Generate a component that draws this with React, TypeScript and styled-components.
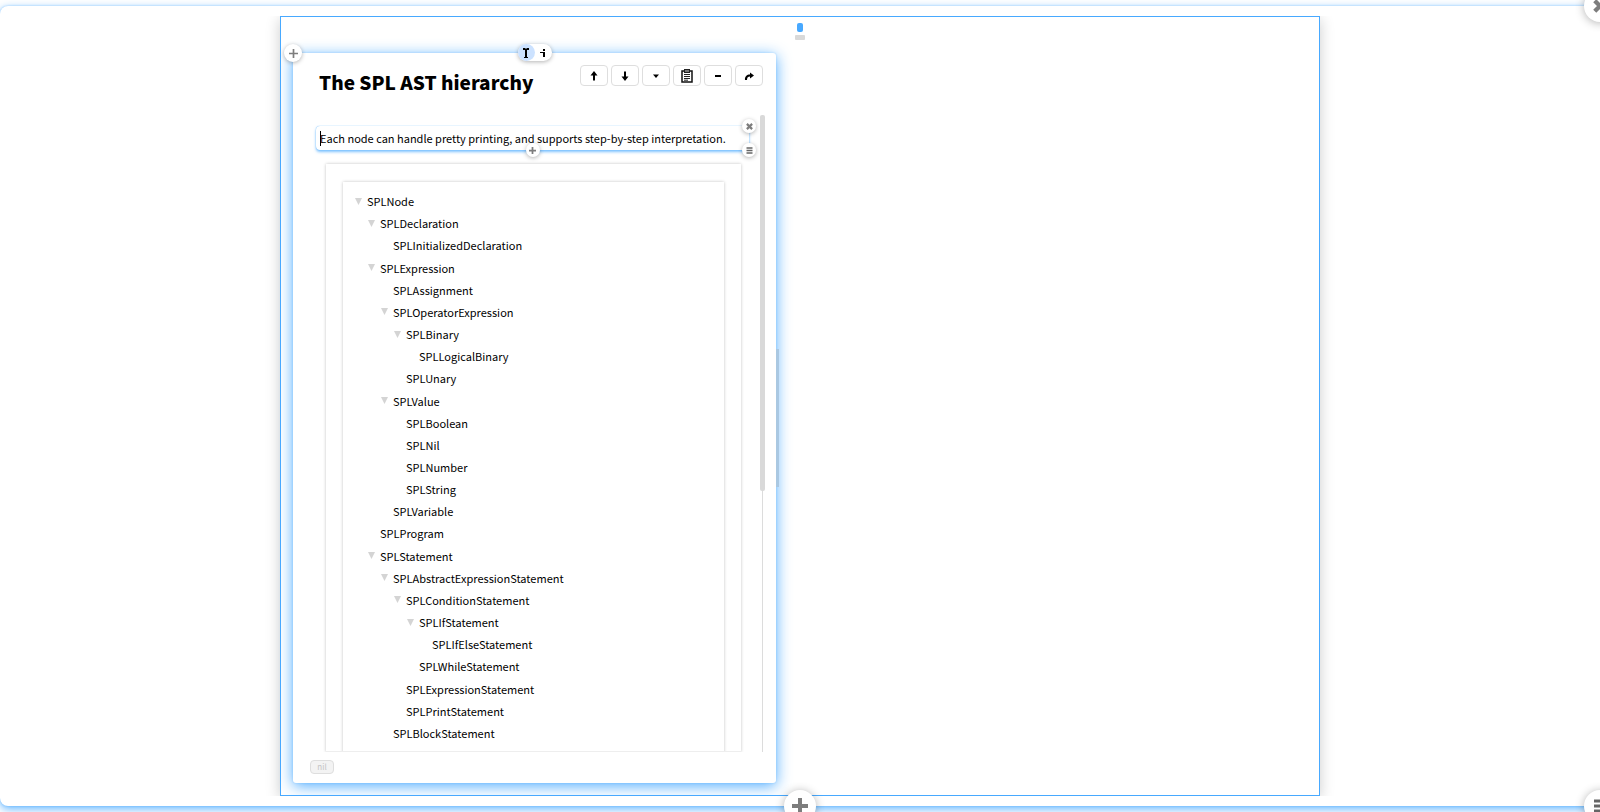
import React from "react";
import styled, { createGlobalStyle } from "styled-components";

const GlobalStyle = createGlobalStyle`
  * { box-sizing: border-box; }
  body {
    margin: 0;
    background: #fff;
    color: #000;
    font-family: "Noto Sans CJK SC", "Noto Sans", sans-serif;
    font-size: 11px;
    overflow: hidden;
  }
  button, input { font: inherit; color: inherit; padding: 0; }
`;

const blue = "#48a9ff";

const Page = styled.main`
  height: 100vh;
  padding: 6px 0;
  overflow: hidden;
`;

const Space = styled.section`
  position: relative;
  display: flex;
  justify-content: center;
  height: 100%;
  padding: 10px 0;
  border-radius: 8px;
  background: #fff;
  box-shadow: 0 0 2px rgba(72, 169, 255, 0.5), 0 3px 10px rgba(72, 169, 255, 0.85);
`;

const Clip = styled.div`
  display: flex;
  justify-content: center;
  width: 100%;
  overflow: hidden;
`;

const Pane = styled.div`
  position: relative;
  display: flex;
  width: 65%;
  padding: 36px 12px 12px;
  border: 1px solid ${blue};
  background: #fff;
  box-shadow: 0 3px 14px rgba(0, 0, 0, 0.2);
`;

const PaneMarker = styled.div`
  position: absolute;
  top: 6px;
  left: 0;
  right: 0;
  display: flex;
  flex-direction: column;
  align-items: center;
  gap: 3px;
`;

const Drop = styled.span`
  width: 6px;
  height: 9px;
  border-radius: 2px;
  background: ${blue};
`;

const Pill = styled.span`
  width: 10px;
  height: 5px;
  border-radius: 1px;
  background: #d9d9d9;
`;

const Card = styled.article`
  position: relative;
  display: flex;
  flex-direction: column;
  width: 483px;
  padding: 12px 11px 9px 17px;
  border-radius: 3px;
  background: #fff;
  box-shadow: 0 0 2px rgba(72, 169, 255, 0.4), 0 3px 15px rgba(72, 169, 255, 0.95);
`;

const Resizer = styled.span`
  position: absolute;
  top: 296px;
  left: 100%;
  width: 3px;
  height: 138px;
  background: #aac8e2;
`;

const Header = styled.header`
  display: flex;
  justify-content: space-between;
  align-items: flex-start;
  height: 50px;
  padding: 0 2px 0 9px;
`;

const Title = styled.h1`
  margin: 0;
  font-size: 19px;
  line-height: 34px;
  font-weight: 900;
  white-space: nowrap;
`;

const Toolbar = styled.div`
  display: flex;
  gap: 3px;
`;

const ToolButton = styled.button`
  display: flex;
  align-items: center;
  justify-content: center;
  width: 28px;
  height: 21px;
  border: 1px solid #dedede;
  border-radius: 4px;
  background: #fff;
`;

const Scroller = styled.div`
  display: flex;
  flex: 1;
  min-height: 0;
`;

const Content = styled.div`
  display: flex;
  flex: 1;
  flex-direction: column;
  gap: 14px;
  min-width: 0;
  padding: 11px 11px 0 6px;
  overflow: hidden;
`;

const Track = styled.div`
  display: flex;
  justify-content: center;
  width: 5px;
  background: linear-gradient(#dcdcdc, #dcdcdc) 2px 0 / 1px 100% no-repeat;
`;

const Thumb = styled.span`
  width: 5px;
  height: 59%;
  border-radius: 2px;
  background: #d9d9d9;
`;

const TextBlock = styled.div`
  position: relative;
  display: flex;
  align-items: center;
  height: 24px;
  padding: 0 4px;
  border-radius: 4px;
  background: #fff;
  box-shadow: 0 0 1px ${blue}, 0 2px 3px rgba(72, 169, 255, 0.7);
`;

const TextInput = styled.input`
  width: 100%;
  border: 0;
  outline: 0;
  background: none;
`;

const Caret = styled.span`
  position: absolute;
  top: 5px;
  left: 4px;
  width: 1px;
  height: 15px;
  background: #000;
`;

const OuterFrame = styled.div`
  display: flex;
  flex: 1;
  min-height: 0;
  margin: 0 8px 0 10px;
  padding: 18px 17px 0;
  border-bottom: 1px solid #eee;
  overflow: hidden;
  box-shadow: 0 0 3px rgba(0, 0, 0, 0.24);
`;

const InnerFrame = styled.div`
  flex: 1;
  min-height: 600px;
  padding: 8px 10px;
  box-shadow: 0 0 3px rgba(0, 0, 0, 0.24);
`;

const Tree = styled.ul`
  display: grid;
  grid-auto-rows: 1fr;
  height: 554px;
  margin: 0;
  padding: 0;
  list-style: none;
`;

const TreeRow = styled.li<{ $level: number }>`
  display: flex;
  align-items: center;
  padding-left: ${(p) => p.$level * 13}px;
  line-height: 20px;
`;

const Toggle = styled.span`
  display: flex;
  width: 14px;
`;

const ToggleButton = styled.button`
  display: flex;
  border: 0;
  padding: 0 2px;
  background: none;
`;

const Footer = styled.footer`
  display: flex;
  padding-top: 8px;
`;

const Chip = styled.button`
  width: 24px;
  height: 14px;
  border: 1px solid #dedede;
  border-radius: 4px;
  background: #f3f3f3;
  color: #c4c4c4;
  font-size: 8px;
  line-height: 10px;
`;

const Handle = styled.button<{ $size: number; $x: string; $y: string }>`
  position: absolute;
  left: ${(p) => p.$x};
  top: ${(p) => p.$y};
  display: flex;
  align-items: center;
  justify-content: center;
  width: ${(p) => p.$size}px;
  height: ${(p) => p.$size}px;
  margin: ${(p) => -p.$size / 2}px;
  border: 0;
  border-radius: 50%;
  background: #fff;
  box-shadow: 0 1px ${(p) => (p.$size > 20 ? 10 : 4)}px rgba(0, 0, 0, 0.3);
`;

const Tabs = styled.div`
  position: absolute;
  top: -9px;
  left: 0;
  right: 0;
  display: flex;
  justify-content: center;
`;

const TabGroup = styled.div`
  display: flex;
  border-radius: 9px;
  background: #fff;
  box-shadow: 0 1px 4px rgba(0, 0, 0, 0.3);
`;

const Tab = styled.button<{ $active?: boolean }>`
  display: flex;
  align-items: center;
  justify-content: center;
  width: 17px;
  height: 17px;
  border: 0;
  border-radius: 50%;
  background: ${(p) => (p.$active ? "#cce2ff" : "transparent")};
`;

const Plus = ({ size, weight }: { size: number; weight: number }) => (
  <svg width={size} height={size} viewBox="0 0 16 16">
    <path d="M8 0V16M0 8H16" stroke="#7d7d7d" strokeWidth={weight} />
  </svg>
);
const Cross = ({ size }: { size: number }) => (
  <svg width={size} height={size} viewBox="0 0 16 16">
    <path d="M2 2L14 14M14 2L2 14" stroke="#7d7d7d" strokeWidth="5" />
  </svg>
);
const Bars = ({ size }: { size: number }) => (
  <svg width={size} height={size} viewBox="0 0 14 14">
    <path d="M1 2H13M1 7H13M1 12H13" stroke="#666" strokeWidth="3" />
  </svg>
);

const icons: { label: string; icon: React.ReactNode }[] = [
  { label: "Move up", icon: <path d="M5 10.500V5.500H2.500L6 1L9.500 5.500H7V10.500Z" /> },
  { label: "Move down", icon: <path d="M5 1.500V6.500H2.500L6 11L9.500 6.500H7V1.500Z" /> },
  { label: "Menu", icon: <path d="M3 4.500H9L6 8Z" /> },
  { label: "Copy", icon: null },
  { label: "Remove", icon: <path d="M3 5H9V7H3Z" /> },
  { label: "Share", icon: <path d="M2 10C1.500 6.500 4 4.500 7 4.500V2.500L11 5.500L7 8.500V6.500C5 6.500 4 7.500 4 10Z" /> },
];

const Clipboard = () => (
  <svg width="12" height="14" viewBox="0 0 12 14">
    <rect x="1" y="2" width="10" height="11" fill="#fff" stroke="#111" strokeWidth="1.500" />
    <rect x="3.500" y="0.500" width="5" height="3" fill="#777" stroke="#222" />
    <path d="M3 5.500H9M3 7.500H9M3 9.500H9M3 11.200H7" stroke="#222" strokeWidth="1" />
  </svg>
);

const nodes: [string, number, boolean][] = [
  ["SPLNode", 0, true],
  ["SPLDeclaration", 1, true],
  ["SPLInitializedDeclaration", 2, false],
  ["SPLExpression", 1, true],
  ["SPLAssignment", 2, false],
  ["SPLOperatorExpression", 2, true],
  ["SPLBinary", 3, true],
  ["SPLLogicalBinary", 4, false],
  ["SPLUnary", 3, false],
  ["SPLValue", 2, true],
  ["SPLBoolean", 3, false],
  ["SPLNil", 3, false],
  ["SPLNumber", 3, false],
  ["SPLString", 3, false],
  ["SPLVariable", 2, false],
  ["SPLProgram", 1, false],
  ["SPLStatement", 1, true],
  ["SPLAbstractExpressionStatement", 2, true],
  ["SPLConditionStatement", 3, true],
  ["SPLIfStatement", 4, true],
  ["SPLIfElseStatement", 5, false],
  ["SPLWhileStatement", 4, false],
  ["SPLExpressionStatement", 3, false],
  ["SPLPrintStatement", 3, false],
  ["SPLBlockStatement", 2, false],
];

export default function App() {
  return (
    <Page>
      <GlobalStyle />
      <Space>
        <Clip>
          <Pane>
            <PaneMarker>
              <Drop />
              <Pill />
            </PaneMarker>
            <Card>
              <Resizer />
              <Header>
                <Title>The SPL AST hierarchy</Title>
                <Toolbar>
                  {icons.map(({ label, icon }) => (
                    <ToolButton key={label} aria-label={label}>
                      {icon ? (
                        <svg width="12" height="12" viewBox="0 0 12 12">{icon}</svg>
                      ) : (
                        <Clipboard />
                      )}
                    </ToolButton>
                  ))}
                </Toolbar>
              </Header>
              <Scroller>
                <Content>
                  <TextBlock>
                    <TextInput
                      aria-label="Text"
                      defaultValue="Each node can handle pretty printing, and supports step-by-step interpretation."
                    />
                    <Caret />
                    <Handle $size={14} $x="50%" $y="100%" aria-label="Add below"><Plus size={7} weight={4} /></Handle>
                    <Handle $size={14} $x="100%" $y="0%" aria-label="Remove text"><Cross size={7} /></Handle>
                    <Handle $size={14} $x="100%" $y="100%" aria-label="Text menu"><Bars size={7} /></Handle>
                  </TextBlock>
                  <OuterFrame>
                    <InnerFrame>
                      <Tree>
                        {nodes.map(([name, level, open]) => (
                          <TreeRow key={name} $level={level}>
                            <Toggle>
                              {open && (
                                <ToggleButton aria-label={`Collapse ${name}`}>
                                  <svg width="7" height="7" viewBox="0 0 7 7"><path d="M0 0H7L3.500 7Z" fill="#d4d4d4" /></svg>
                                </ToggleButton>
                              )}
                            </Toggle>
                            {name}
                          </TreeRow>
                        ))}
                      </Tree>
                    </InnerFrame>
                  </OuterFrame>
                </Content>
                <Track><Thumb /></Track>
              </Scroller>
              <Footer>
                <Chip>nil</Chip>
              </Footer>
              <Tabs>
                <TabGroup>
                  <Tab $active aria-label="Code view">
                    <svg width="6" height="10" viewBox="0 0 6 10"><path d="M0 0H2L3 1L4 0H6V2H4V9H5V10H1V9H2V2H0Z" /></svg>
                  </Tab>
                  <Tab aria-label="Info view">
                    <svg width="6" height="10" viewBox="0 0 6 10"><path d="M3 1H5V3H3ZM0 4H5V9H3V5H0Z" /></svg>
                  </Tab>
                </TabGroup>
              </Tabs>
              <Handle $size={18} $x="0%" $y="0%" aria-label="Add column"><Plus size={9} weight={3} /></Handle>
            </Card>
          </Pane>
        </Clip>
        <Handle $size={32} $x="50%" $y="100%" aria-label="Add snippet"><Plus size={16} weight={4} /></Handle>
        <Handle $size={32} $x="100%" $y="0%" aria-label="Close"><Cross size={14} /></Handle>
        <Handle $size={32} $x="100%" $y="100%" aria-label="Menu"><Bars size={14} /></Handle>
      </Space>
    </Page>
  );
}
